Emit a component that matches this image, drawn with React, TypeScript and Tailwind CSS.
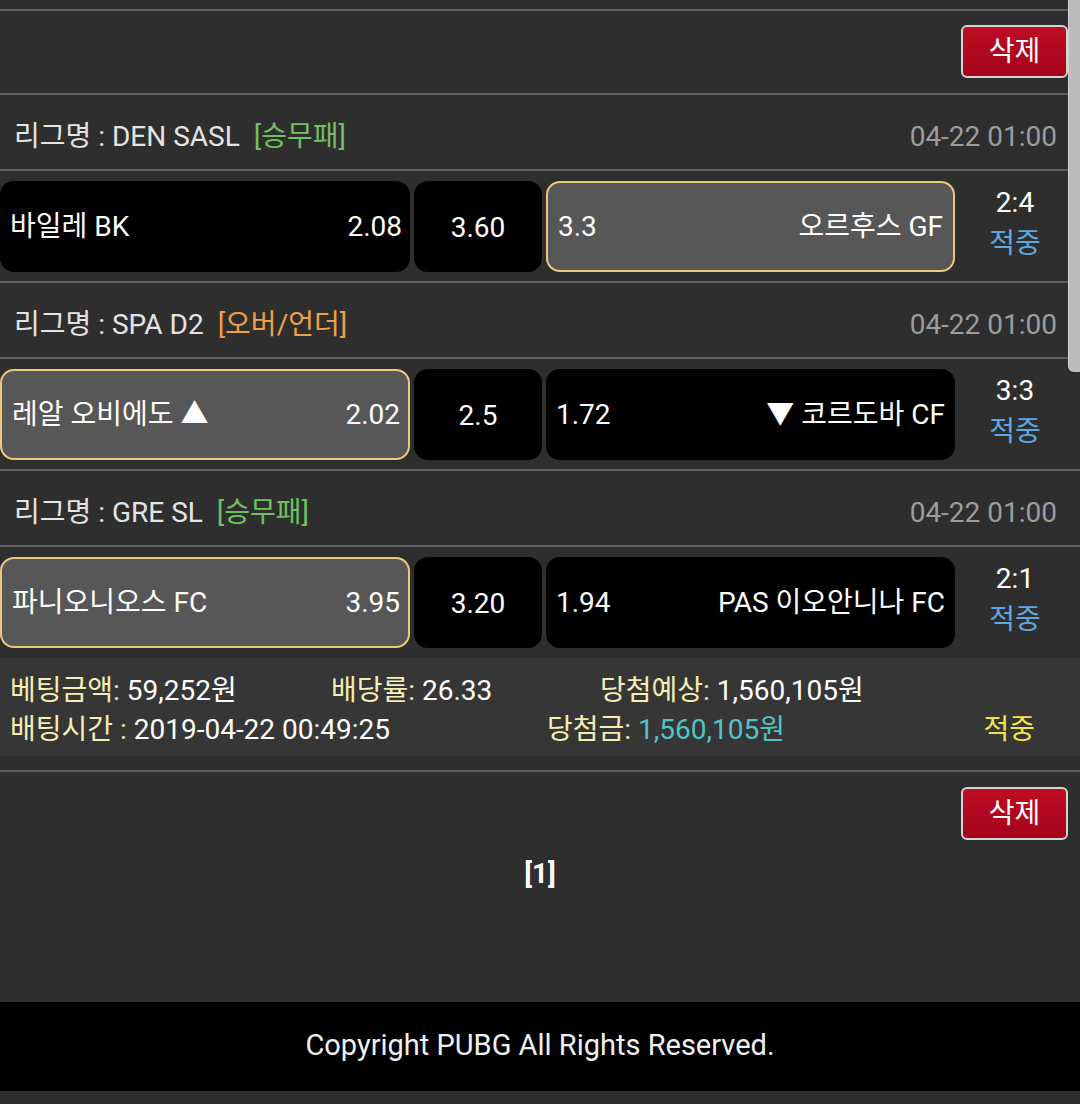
import React from "react";

type Match = {
  league: string;
  tag: string;
  tagColor: string;
  date: string;
  home: string;
  homeOdds: string;
  mid: string;
  awayOdds: string;
  away: string;
  selected: "home" | "away";
  score: string;
};

const matches: Match[] = [
  {
    league: "DEN SASL",
    tag: "[승무패]",
    tagColor: "text-[#72c063]",
    date: "04-22 01:00",
    home: "바일레 BK",
    homeOdds: "2.08",
    mid: "3.60",
    awayOdds: "3.3",
    away: "오르후스 GF",
    selected: "away",
    score: "2:4",
  },
  {
    league: "SPA D2",
    tag: "[오버/언더]",
    tagColor: "text-[#f0a04a]",
    date: "04-22 01:00",
    home: "레알 오비에도 ▲",
    homeOdds: "2.02",
    mid: "2.5",
    awayOdds: "1.72",
    away: "▼ 코르도바 CF",
    selected: "home",
    score: "3:3",
  },
  {
    league: "GRE SL",
    tag: "[승무패]",
    tagColor: "text-[#72c063]",
    date: "04-22 01:00",
    home: "파니오니오스 FC",
    homeOdds: "3.95",
    mid: "3.20",
    awayOdds: "1.94",
    away: "PAS 이오안니나 FC",
    selected: "home",
    score: "2:1",
  },
];

function Line() {
  return <div className="h-[2px] bg-[#5e5e5e]" />;
}

function DeleteButton() {
  return (
    <button className="h-[53px] w-[107px] rounded-[6px] border-2 border-[#d4d4d4] bg-gradient-to-b from-[#bd0d24] to-[#a3041a] text-[28px] leading-none text-white">
      삭제
    </button>
  );
}

function Header({ m }: { m: Match }) {
  return (
    <div className="flex h-[74px] items-center justify-between pl-[14px] pr-[23px] pt-[10px] text-[28px] leading-none">
      <div className="flex items-center">
        <span className="text-[#e4e4e4]">리그명 : {m.league}</span>
        <span className={`ml-[14px] ${m.tagColor}`}>{m.tag}</span>
      </div>
      <span className="text-[#9c9c9c]">{m.date}</span>
    </div>
  );
}

function Row({ m }: { m: Match }) {
  const sel = "bg-[#575757] border-2 border-[#ecca7c]";
  const unsel = "bg-black";
  return (
    <div className="flex items-center pb-[9px] pt-[10px] text-[28px] leading-none text-white">
      <div
        className={`flex h-[91px] w-[410px] items-center justify-between rounded-[14px] pl-[10px] pr-[8px] ${
          m.selected === "home" ? sel : unsel
        }`}
      >
        <span>{m.home}</span>
        <span>{m.homeOdds}</span>
      </div>
      <div className="ml-[4px] flex h-[91px] w-[128px] items-center justify-center rounded-[14px] bg-black pt-[3px]">
        {m.mid}
      </div>
      <div
        className={`ml-[4px] flex h-[91px] w-[409px] items-center justify-between rounded-[14px] pl-[10px] pr-[10px] ${
          m.selected === "away" ? sel : unsel
        }`}
      >
        <span>{m.awayOdds}</span>
        <span>{m.away}</span>
      </div>
      <div className="flex w-[120px] flex-col items-center pb-[7px]">
        <span className="leading-[41px]">{m.score}</span>
        <span className="leading-[41px] text-[#5ea8e2]">적중</span>
      </div>
    </div>
  );
}

export default function App() {
  return (
    <div className="relative min-h-[1104px] w-[1080px] bg-[#2e2e2e] font-[Roboto,'Noto_Sans_CJK_KR',sans-serif]">
      <div className="h-[9px]" />
      <Line />
      <div className="flex justify-end pb-[15px] pr-[12px] pt-[14px]">
        <DeleteButton />
      </div>
      {matches.map((m, i) => (
        <div key={i}>
          <Line />
          <Header m={m} />
          <Line />
          <Row m={m} />
        </div>
      ))}
      <div className="mt-[1px] bg-[#363636] pb-[7px] pt-[13px] text-[28px] leading-[39px] text-white">
        <div className="flex">
          <div className="w-[331px] pl-[10px]">
            <span className="text-[#f4efb4]">베팅금액:</span> 59,252원
          </div>
          <div className="w-[269px]">
            <span className="text-[#f4efb4]">배당률:</span> 26.33
          </div>
          <div>
            <span className="text-[#f4efb4]">당첨예상:</span> 1,560,105원
          </div>
        </div>
        <div className="flex">
          <div className="w-[547px] pl-[10px]">
            <span className="text-[#f4efb4]">배팅시간 :</span> 2019-04-22 00:49:25
          </div>
          <div className="flex-1">
            <span className="text-[#f4efb4]">당첨금:</span>{" "}
            <span className="text-[#52c4c6]">1,560,105원</span>
          </div>
          <div className="mr-[45px] text-[#f3e44e]">적중</div>
        </div>
      </div>
      <div className="h-[14px]" />
      <Line />
      <div className="flex justify-end pr-[12px] pt-[15px]">
        <DeleteButton />
      </div>
      <div className="mt-[18px] text-center text-[28px] font-bold leading-[32px] text-white">[1]</div>
      <div className="h-[112px]" />
      <div className="flex h-[89px] items-center justify-center bg-black pb-[3px] text-[29px] leading-none text-[#f0f0f0]">
        Copyright PUBG All Rights Reserved.
      </div>
      <div className="h-[12px]" />
      <div className="absolute right-0 top-0 h-[372px] w-[12px] rounded-bl-[6px] border-l border-[#d0d0d0] bg-[#bcbcbc]" />
    </div>
  );
}
